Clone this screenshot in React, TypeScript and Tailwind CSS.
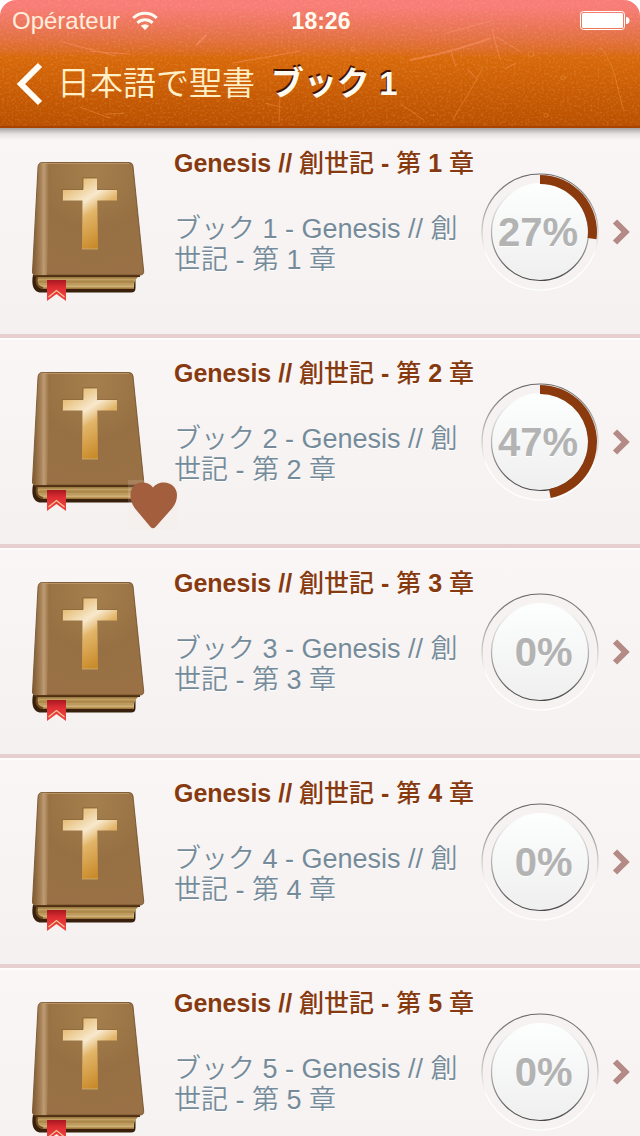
type Chapter = {
  number: number;
  progress: number;
  favorite?: boolean;
};

const chapters: Chapter[] = [
  { number: 1, progress: 27 },
  { number: 2, progress: 47, favorite: true },
  { number: 3, progress: 0 },
  { number: 4, progress: 0 },
  { number: 5, progress: 0 },
];

function HeaderTexture() {
  return (
    <svg className="absolute inset-0 h-full w-full" viewBox="0 0 640 128" preserveAspectRatio="none" aria-hidden="true">
      <filter id="grain" x="0" y="0" width="100%" height="100%">
        <feTurbulence type="fractalNoise" baseFrequency="0.43" numOctaves="3" seed="11" />
        <feColorMatrix values="0 0 0 0 1  0 0 0 0 0.6  0 0 0 0 0.3  2 0 0 0 -0.9" />
      </filter>
      <rect width="640" height="128" filter="url(#grain)" opacity="0.24" />
      <g fill="none" stroke="#ff9b78" strokeLinecap="round" opacity="0.45">
        <path d="M411 61 C440 55 466 48 490 39" strokeWidth="2" />
        <path d="M445 34 L492 21" />
        <path d="M197 45 L206 36" strokeWidth="2" />
        <path d="M233 64 L300 52" />
        <path d="M60 42 L116 57" />
        <path d="M90 52 L130 55" />
        <path d="M492 30 L500 60 M497 38 L520 52 M505 70 L516 64" />
        <path d="M451 52 L456 68 M468 70 L476 80" />
      </g>
      <g fill="none" stroke="#f09a4a" strokeLinecap="round" opacity="0.45">
        <path d="M482 70 C474 88 462 104 453 122" />
        <path d="M600 48 C616 64 616 90 624 112" />
        <path d="M80 109 L110 120 M105 116 L124 115" />
        <path d="M280 95 L279 124 M266 105 L282 109" />
        <path d="M344 70 L345 102 M400 105 L424 122" />
        <circle cx="531" cy="55" r="3" />
        <circle cx="563" cy="79" r="2" />
        <circle cx="546" cy="117" r="2" />
        <circle cx="353" cy="50" r="2" />
      </g>
    </svg>
  );
}

function WifiIcon() {
  return (
    <svg width="26" height="20" viewBox="0 0 26 20" aria-hidden="true">
      <g fill="none" stroke="#fffaf0" strokeWidth="3">
        <path d="M1.2 7 A17 17 0 0 1 24.8 7" />
        <path d="M5.4 11.8 A11 11 0 0 1 20.6 11.8" />
      </g>
      <path d="M13 19 L8.8 14.8 A7 7 0 0 1 17.2 14.8 Z" fill="#fffaf0" />
    </svg>
  );
}

function BatteryIcon() {
  return (
    <svg width="50" height="20" viewBox="0 0 50 20" aria-hidden="true">
      <rect x="0.5" y="0.5" width="44" height="18" rx="3" fill="none" stroke="#fff" />
      <rect x="2" y="2" width="41" height="15" rx="1.5" fill="#fff" />
      <path d="M46 6 a3.5 3.5 0 0 1 0 7 Z" fill="#fff" />
    </svg>
  );
}

function Gradients() {
  return (
    <svg className="absolute h-0 w-0" aria-hidden="true">
      <defs>
        <radialGradient id="cover" cx="0.55" cy="0.1" r="1">
          <stop offset="0" stopColor="#a67f4e" />
          <stop offset="0.5" stopColor="#967042" />
          <stop offset="1" stopColor="#9a7146" />
        </radialGradient>
        <linearGradient id="spine" x1="0" y1="0" x2="1" y2="0">
          <stop offset="0" stopColor="#80592f" />
          <stop offset="0.45" stopColor="#a9845a" />
          <stop offset="0.6" stopColor="#bd9b74" />
          <stop offset="0.75" stopColor="#ac875c" />
          <stop offset="1" stopColor="#8b6438" stopOpacity="0" />
        </linearGradient>
        <linearGradient id="gold" x1="0" y1="0" x2="0.5" y2="1">
          <stop offset="0" stopColor="#d9a04c" />
          <stop offset="0.2" stopColor="#e9c586" />
          <stop offset="0.42" stopColor="#f8e9cd" />
          <stop offset="0.6" stopColor="#e2b569" />
          <stop offset="1" stopColor="#c98c2c" />
        </linearGradient>
        <linearGradient id="pages" x1="0" y1="0" x2="0" y2="1">
          <stop offset="0" stopColor="#7c5b2c" />
          <stop offset="0.3" stopColor="#c9a868" />
          <stop offset="0.5" stopColor="#b08a4a" />
          <stop offset="0.75" stopColor="#e2c68a" />
          <stop offset="1" stopColor="#94692f" />
        </linearGradient>
        <linearGradient id="ribbon" x1="0" y1="0" x2="0" y2="1">
          <stop offset="0" stopColor="#a81820" />
          <stop offset="0.35" stopColor="#dd2d33" />
          <stop offset="1" stopColor="#f04845" />
        </linearGradient>
        <linearGradient id="disc" x1="0" y1="0" x2="0" y2="1">
          <stop offset="0" stopColor="#fdfefe" />
          <stop offset="1" stopColor="#efefef" />
        </linearGradient>
        <linearGradient id="discEdge" x1="0" y1="0" x2="0" y2="1">
          <stop offset="0" stopColor="#fff" />
          <stop offset="0.4" stopColor="#c8c6c6" />
          <stop offset="1" stopColor="#4a4a4a" />
        </linearGradient>
        <linearGradient id="ringEdge" x1="0" y1="0" x2="0" y2="1">
          <stop offset="0" stopColor="#666" />
          <stop offset="0.5" stopColor="#d0cccc" />
          <stop offset="0.7" stopColor="#fff" />
          <stop offset="1" stopColor="#fff" />
        </linearGradient>
      </defs>
    </svg>
  );
}

function BookIcon() {
  return (
    <svg width="116" height="144" viewBox="0 0 116 144" aria-hidden="true">
      {/* back cover and page block */}
      <path d="M3 115 C1.5 122 2 132.5 11 132.5 H101 Q105.5 132.5 105.5 128 V117 Z" fill="#38200c" />
      <path d="M6 116 H109 Q103 121 104 129 H13 Q5 128 6 116 Z" fill="url(#pages)" />
      <path d="M7 117 Q5 127 13 128" fill="none" stroke="#6d4920" strokeWidth="2" />
      <path d="M9 121 H104 M9 125 H103" stroke="#8d6b36" strokeWidth="0.6" />
      <path d="M4 116 H110" stroke="#4d3013" strokeWidth="2" />
      {/* front cover */}
      <path d="M12 2.5 H99 Q102.5 2.5 103 6 L113.7 111 Q114 115 110 115 H7 Q2 116 2.5 111 L8 7 Q8.5 2.5 12 2.5 Z" fill="url(#cover)" stroke="#6b4822" strokeWidth="0.8" />
      <path d="M12 2.8 H21 L17 115 H7 Q2.5 115.5 3 111 L8.5 7 Q9 2.8 12 2.8 Z" fill="url(#spine)" />
      <path d="M12 3.5 H99" stroke="#c29c6a" strokeWidth="0.8" />
      {/* cross */}
      <path d="M53 18 H67 V29.5 H87 V40.5 H67.3 L68 89 H52 L52.5 40.5 H32.3 V29.5 H53 Z" fill="url(#gold)" />
      <path d="M32.3 40.5 V29.5 H53 V18 H67 M67 29.5 H87" fill="none" stroke="#7d5526" strokeWidth="0.7" />
      <path d="M52 89 H68" stroke="#d5b67e" strokeWidth="0.7" />
      {/* bookmark */}
      <path d="M17 120 H36 V141 L26.5 134 L17 141 Z" fill="url(#ribbon)" />
      <path d="M18.5 137 L26.5 130.5 L34.5 137" fill="none" stroke="#f6c493" strokeWidth="1.3" />
    </svg>
  );
}

function FavoriteBadge() {
  return (
    <svg className="absolute -right-8 -bottom-4" width="50" height="50" viewBox="0 0 50 50" role="img" aria-label="favorite">
      <rect width="50" height="50" fill="#f3e6dc" opacity="0.15" />
      <path d="M22.5 47 L7 28.5 C3.5 24 2.5 19 2.5 15 C2.5 7 8 2.5 14.5 2.5 C19 2.5 22.5 4 25 7.5 C28 4 31 2.5 36 2.5 C43 2.5 49 7.5 49 15 C49 20 47.5 24 44 28.5 L27.5 47 Q25 49.5 22.5 47 Z" fill="#a35e3d" />
    </svg>
  );
}

function ProgressRing({ value }: { value: number }) {
  const angle = (value / 100) * 2 * Math.PI;
  const point = (r: number) => `${60 + r * Math.sin(angle)} ${60 - r * Math.cos(angle)}`;
  const large = value > 50 ? 1 : 0;

  return (
    <div className="relative grid size-[120px] shrink-0 place-items-center">
      <svg className="absolute inset-0" width="120" height="120" viewBox="0 0 120 120" aria-hidden="true">
        <circle cx="60" cy="60" r="58" fill="#f6f2f2" stroke="url(#ringEdge)" strokeWidth="1.2" />
        <circle cx="60" cy="60" r="48.5" fill="url(#disc)" stroke="url(#discEdge)" strokeWidth="1.2" />
        {value > 0 && (
          <path
            d={`M60 3 A57 57 0 ${large} 1 ${point(57)} L${point(48)} A48 48 0 ${large} 0 60 12 Z`}
            fill="#8b3a0e"
          />
        )}
      </svg>
      <span className="relative pr-1 text-[40px] leading-none font-bold whitespace-pre text-[#b3b3b3] [text-shadow:0_1px_0_#fff]">
        {`${value}%`.padStart(3, " ")}
      </span>
    </div>
  );
}

function ChapterRow({ number, progress, favorite }: Chapter) {
  return (
    <li>
      <a
        href={`#chapter-${number}`}
        className="flex items-start border-t-2 border-b-4 border-t-[#fffdfb] border-b-[#e8cfcf] bg-linear-to-b from-[#f9f6f5] to-[#f5f1f0] pt-[30px] pr-2 pb-[30px] pl-[30px]"
      >
        <div className="relative shrink-0">
          <BookIcon />
          {favorite && <FavoriteBadge />}
        </div>
        <div className="-mt-3 ml-7 min-w-0 flex-1 [text-shadow:0_1px_0_#fff]">
          <h2 className="text-[25px] leading-[31px] font-bold whitespace-nowrap text-[#87390f]">
            Genesis // <span className="font-medium">創世記</span> - <span className="font-medium">第</span>
            {` ${number} `}
            <span className="font-medium">章</span>
          </h2>
          <p className="mt-[35px] max-w-[290px] text-[27px] leading-[31px] font-[350] break-all text-[#758b9a]">
            {`ブック ${number} - Genesis // 創世記 - 第 ${number} 章`}
          </p>
        </div>
        <div className="flex items-center gap-3 pt-3">
          <ProgressRing value={progress} />
          <svg width="20" height="28" viewBox="0 0 20 28" fill="none" stroke="#b38a85" strokeWidth="6" aria-hidden="true">
            <path d="M3 3.5 L13.5 14 L3 24.5" />
          </svg>
        </div>
      </a>
    </li>
  );
}

export default function App() {
  return (
    <div className="flex h-screen flex-col bg-white font-['Liberation_Sans','Noto_Sans_CJK_JP',sans-serif]">
      <Gradients />

      {/* Header */}
      <header className="relative z-10 shrink-0 overflow-hidden rounded-t-2xl border-b-2 border-[#a84400] bg-linear-to-b from-[#f87c78] from-5% via-[#d8690a] via-45% to-[#b94f00] text-[#fffaf0]">
        <HeaderTexture />
        <div className="relative flex h-[42px] items-center pr-[10px] pl-3">
          <div className="flex flex-1 items-center gap-3 text-[24px] text-[#ffeedd]">
            Opérateur
            <WifiIcon />
          </div>
          <time className="text-[23px] font-bold">18:26</time>
          <div className="flex flex-1 justify-end">
            <BatteryIcon />
          </div>
        </div>
        <div className="relative flex h-[84px] items-center pl-4">
          <button type="button" aria-label="戻る" className="mr-3.5">
            <svg width="27" height="44" viewBox="0 0 27 44" fill="none" stroke="#fffdf5" strokeWidth="6" aria-hidden="true">
              <path d="M24 3 L5 22 L24 41" />
            </svg>
          </button>
          <h1 className="flex items-baseline gap-4 text-[33px] leading-10">
            <span className="font-[350] text-[#fff0c8]">日本語で聖書</span>
            <span className="font-bold [text-shadow:-1px_-2px_0_#3d1400]">ブック 1</span>
          </h1>
        </div>
      </header>

      {/* Chapters */}
      <main className="min-h-0 flex-1 overflow-y-auto [scrollbar-width:none]">
        <div className="pointer-events-none relative z-10 -mb-3 h-3 bg-linear-to-b from-[#a5a2a2] via-[#dcd9d9]/70 to-transparent" />
        <ul>
          {chapters.map((chapter) => (
            <ChapterRow key={chapter.number} {...chapter} />
          ))}
        </ul>
      </main>
    </div>
  );
}
